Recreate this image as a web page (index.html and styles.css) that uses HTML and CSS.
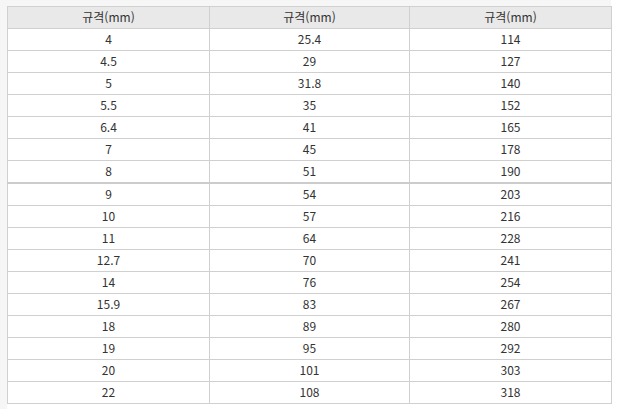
FILE: index.html
```html
<!DOCTYPE html>
<html lang="ko">
<head>
<meta charset="utf-8">
<link rel="stylesheet" href="styles.css">
</head>
<body>
<div class="wrap">
<table class="spec">
<colgroup><col class="c1"><col class="c2"><col class="c3"></colgroup>
<thead>
<tr><th>규격(mm)</th><th>규격(mm)</th><th>규격(mm)</th></tr>
</thead>
<tbody>
<tr><td>4</td><td>25.4</td><td>114</td></tr>
<tr><td>4.5</td><td>29</td><td>127</td></tr>
<tr><td>5</td><td>31.8</td><td>140</td></tr>
<tr><td>5.5</td><td>35</td><td>152</td></tr>
<tr><td>6.4</td><td>41</td><td>165</td></tr>
<tr><td>7</td><td>45</td><td>178</td></tr>
<tr class="split"><td>8</td><td>51</td><td>190</td></tr>
<tr><td>9</td><td>54</td><td>203</td></tr>
<tr><td>10</td><td>57</td><td>216</td></tr>
<tr><td>11</td><td>64</td><td>228</td></tr>
<tr><td>12.7</td><td>70</td><td>241</td></tr>
<tr><td>14</td><td>76</td><td>254</td></tr>
<tr><td>15.9</td><td>83</td><td>267</td></tr>
<tr><td>18</td><td>89</td><td>280</td></tr>
<tr><td>19</td><td>95</td><td>292</td></tr>
<tr><td>20</td><td>101</td><td>303</td></tr>
<tr><td>22</td><td>108</td><td>318</td></tr>
</tbody>
</table>
</div>
</body>
</html>
```
FILE: styles.css
```css
html, body {
  margin: 0;
  padding: 0;
  background: #ffffff;
}
.wrap {
  width: 619px;
  height: 409px;
  box-sizing: border-box;
  padding: 6px 0 0 7px;
  background:
    linear-gradient(to right, #f6f6f6 0, #f6f6f6 7px, transparent 7px),
    linear-gradient(to bottom, #f6f6f6 0, #f6f6f6 6px, transparent 6px);
  background-repeat: no-repeat;
  background-size: 7px 100%, 611px 6px;
}
.spec {
  border-collapse: collapse;
  table-layout: fixed;
  width: 604px;
  font-family: "Noto Sans CJK KR", "DejaVu Sans", sans-serif;
  font-size: 12px;
  color: #333333;
  background: #ffffff;
}
.c1 { width: 202px; }
.c2 { width: 200px; }
.c3 { width: 202px; }
.spec th, .spec td {
  border: 1px solid #d0d0d0;
  height: 19px;
  padding: 0 0 2px;
  text-align: center;
  vertical-align: middle;
  line-height: 14px;
  font-weight: normal;
}
.spec th {
  background: #e9e9e9;
}
.spec tr.split td {
  border-bottom: 2px solid #cccccc;
}
```
